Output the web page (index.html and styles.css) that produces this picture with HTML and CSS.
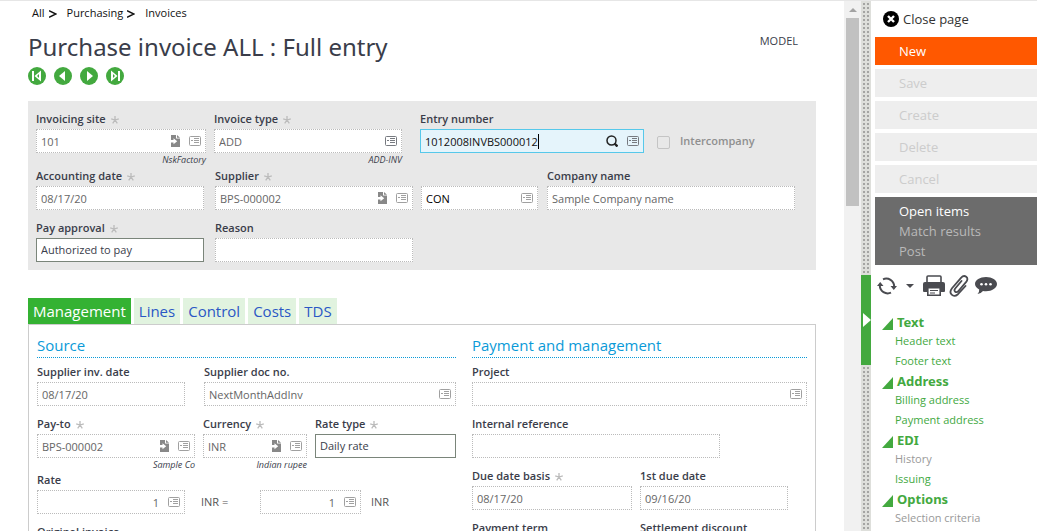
FILE: index.html
```html
<!DOCTYPE html>
<html lang="en">
<head>
<meta charset="utf-8">
<title>Purchase invoice ALL : Full entry</title>
<link rel="stylesheet" href="styles.css">
</head>
<body>
<svg class="sprite" aria-hidden="true">
  <symbol id="card" viewBox="0 0 12 10">
    <rect x=".5" y=".5" width="11" height="9" rx="1" fill="none" stroke="currentColor"/>
    <path d="M2 4.500h2M5 2.500h5M5 4.500h5M5 6.500h5" fill="none" stroke="currentColor"/>
  </symbol>
  <symbol id="jump" viewBox="0 0 10 12">
    <path d="M1 0h5v3.500h4V12H1zM7 0l3 2.700H7z" fill="currentColor"/>
    <path d="M0 5h3.500V3.200L7.200 6.200 3.500 9.200V7.400H0z" fill="#fff"/>
  </symbol>
  <symbol id="star" viewBox="0 0 8 8">
    <path d="M4 4V0M4 4L.2 2.800M4 4L1.700 7.400M4 4l2.300 3.400M4 4l3.800-1.200" fill="none" stroke="currentColor" stroke-width="1.300"/>
  </symbol>
  <symbol id="corner" viewBox="0 0 11 12"><path d="M11 0v12H0z" fill="currentColor"/></symbol>
</svg>
<div class="page">
  <main class="main">
    <nav class="crumbs" aria-label="Breadcrumb">
      <a href="#">All</a><svg viewBox="0 0 8 8"><path d="M0 .7 7 4 0 7.300"/></svg>
      <a href="#">Purchasing</a><svg viewBox="0 0 8 8"><path d="M0 .7 7 4 0 7.300"/></svg>
      <a href="#">Invoices</a>
    </nav>
    <header class="head">
      <h1>Purchase invoice ALL : Full entry</h1>
      <a class="model" href="#">MODEL</a>
    </header>
    <div class="records">
      <button aria-label="First"><svg viewBox="0 0 18 18"><circle cx="9" cy="9" r="9"/><path d="M4 4h2v10H4zM13 3.500v11L6.500 9z"/><path class="cut" d="M11 7v4L9 9z"/></svg></button>
      <button aria-label="Previous"><svg viewBox="0 0 18 18"><circle cx="9" cy="9" r="9"/><path d="M11 4v10L5 9z"/></svg></button>
      <button aria-label="Next"><svg viewBox="0 0 18 18"><circle cx="9" cy="9" r="9"/><path d="M7 4v10l6-5z"/></svg></button>
      <button aria-label="Last"><svg viewBox="0 0 18 18"><circle cx="9" cy="9" r="9"/><path d="M14 4h-2v10h2zM5 3.500v11L11.500 9z"/><path class="cut" d="M7 7v4l2-2z"/></svg></button>
    </div>

    <section class="summary">
      <div class="row">
        <div class="field w170"><label for="site">Invoicing site<svg class="req"><use href="#star"/></svg></label>
          <div class="box"><input id="site" value="101"><button aria-label="Go to site"><svg class="jump"><use href="#jump"/></svg></button><button aria-label="Site list"><svg class="card"><use href="#card"/></svg></button></div><span class="note">NskFactory</span></div>
        <div class="field w188"><label for="type">Invoice type<svg class="req"><use href="#star"/></svg></label>
          <div class="box"><input id="type" value="ADD"><button aria-label="Type list"><svg class="card dark"><use href="#card"/></svg></button></div><span class="note">ADD-INV</span></div>
        <div class="field w224 wide-gap"><label for="entry">Entry number</label>
          <div class="box active"><input id="entry" value="1012008INVBS000012"><span class="caret"></span><button class="last" aria-label="Search"><svg class="find" viewBox="0 0 12 12"><circle cx="5.500" cy="5.500" r="4.500" fill="none" stroke="currentColor" stroke-width="1.500"/><path d="m8.500 8.500 3 3" stroke="currentColor" stroke-width="2.400"/></svg></button><button aria-label="Entry list"><svg class="card dark"><use href="#card"/></svg></button></div></div>
        <div class="check"><input type="checkbox" id="inter" disabled><label for="inter">Intercompany</label></div>
      </div>
      <div class="row">
        <div class="field w168"><label for="adate">Accounting date<svg class="req"><use href="#star"/></svg></label>
          <div class="box"><input id="adate" value="08/17/20"></div></div>
        <div class="field w198"><label for="supplier">Supplier<svg class="req"><use href="#star"/></svg></label>
          <div class="box"><input id="supplier" value="BPS-000002"><button aria-label="Go to supplier"><svg class="jump"><use href="#jump"/></svg></button><button aria-label="Supplier list"><svg class="card"><use href="#card"/></svg></button></div></div>
        <div class="field w117 bottom"><div class="box"><input class="black" aria-label="Control account" value="CON"><button aria-label="Account list"><svg class="card"><use href="#card"/></svg></button></div></div>
        <div class="field w248"><label for="company">Company name</label>
          <div class="box"><input id="company" value="Sample Company name"></div></div>
      </div>
      <div class="row spaced">
        <div class="field w168"><label for="pay">Pay approval<svg class="req"><use href="#star"/></svg></label>
          <select id="pay"><option>Authorized to pay</option></select></div>
        <div class="field w198"><label for="reason">Reason</label><div class="box"><input id="reason"></div></div>
      </div>
    </section>

    <nav class="tabs" aria-label="Sections">
      <a class="on" href="#">Management</a><a href="#">Lines</a><a href="#">Control</a><a href="#">Costs</a><a href="#">TDS</a>
    </nav>
    <div class="panel">
      <section class="source">
        <h2>Source</h2>
        <div class="row gap19">
          <div class="field w148"><label for="sdate">Supplier inv. date</label><div class="box"><input id="sdate" value="08/17/20"></div></div>
          <div class="field grow"><label for="doc">Supplier doc no.</label><div class="box"><input id="doc" value="NextMonthAddInv"><button aria-label="Document list"><svg class="card"><use href="#card"/></svg></button></div></div>
        </div>
        <div class="row spaced">
          <div class="field w158"><label for="payto">Pay-to<svg class="req"><use href="#star"/></svg></label>
            <div class="box"><input id="payto" value="BPS-000002"><button aria-label="Go to pay-to"><svg class="jump"><use href="#jump"/></svg></button><button aria-label="Pay-to list"><svg class="card"><use href="#card"/></svg></button></div><span class="note">Sample Co</span></div>
          <div class="field w104"><label for="cur">Currency<svg class="req"><use href="#star"/></svg></label>
            <div class="box"><input id="cur" value="INR"><button aria-label="Go to currency"><svg class="jump"><use href="#jump"/></svg></button><button aria-label="Currency list"><svg class="card"><use href="#card"/></svg></button></div><span class="note">Indian rupee</span></div>
          <div class="field grow"><label for="rtype">Rate type<svg class="req"><use href="#star"/></svg></label>
            <select id="rtype"><option>Daily rate</option></select></div>
        </div>
        <div class="row rate">
          <div class="field w148"><label for="rate">Rate</label><div class="box num"><input id="rate" value="1"><button aria-label="Rate list"><svg class="card"><use href="#card"/></svg></button></div></div>
          <span class="unit first">INR =</span>
          <div class="field w101 bottom"><div class="box num"><input aria-label="Rate divisor" value="1"><button aria-label="Divisor list"><svg class="card"><use href="#card"/></svg></button></div></div>
          <span class="unit">INR</span>
        </div>
        <div class="row spaced"><div class="field w148"><label for="orig">Original invoice</label><div class="box"><input id="orig"></div></div></div>
      </section>
      <section class="payment">
        <h2>Payment and management</h2>
        <div class="row"><div class="field grow"><label for="project">Project</label><div class="box"><input id="project"><button aria-label="Project list"><svg class="card"><use href="#card"/></svg></button></div></div></div>
        <div class="row spaced"><div class="field w248"><label for="iref">Internal reference</label><div class="box"><input id="iref"></div></div></div>
        <div class="row spaced">
          <div class="field w160"><label for="ddb">Due date basis<svg class="req"><use href="#star"/></svg></label><div class="box"><input id="ddb" value="08/17/20"></div></div>
          <div class="field w148"><label for="due">1st due date</label><div class="box"><input id="due" value="09/16/20"></div></div>
        </div>
        <div class="row spaced">
          <div class="field w160"><label for="term">Payment term</label><div class="box"><input id="term"></div></div>
          <div class="field w148"><label for="disc">Settlement discount</label><div class="box"><input id="disc"></div></div>
        </div>
      </section>
    </div>
  </main>

  <div class="scroll"><svg viewBox="0 0 8 4"><path d="M4 0l4 4H0z"/></svg><div class="thumb"></div></div>
  <div class="split"><button aria-label="Toggle side panel"><svg viewBox="0 0 8 14"><path d="M0 0l8 7-8 7z"/></svg></button></div>

  <aside class="side">
    <button class="close"><svg viewBox="0 0 16 16"><circle cx="8" cy="8" r="8"/><path d="m5 5 6 6m0-6-6 6"/></svg>Close page</button>
    <div class="actions">
      <button class="new">New</button>
      <button disabled>Save</button>
      <button disabled>Create</button>
      <button disabled>Delete</button>
      <button disabled>Cancel</button>
    </div>
    <div class="more"><button>Open items</button><button disabled>Match results</button><button disabled>Post</button></div>
    <div class="tools">
      <button class="refresh" aria-label="Refresh"><svg width="20" height="18" viewBox="0 0 20 18"><path d="M6 2.300A8 8 0 0 1 17.200 9.500M14 15.700A8 8 0 0 1 2.800 8.500" fill="none" stroke="currentColor" stroke-width="2"/><path d="M13.500 9H20l-3.200 4zM0 9h6.500L3.200 5z" fill="currentColor"/></svg></button>
      <button class="arrow" aria-label="Refresh options"><svg width="8" height="4" viewBox="0 0 8 4"><path d="M0 0h8L4 4z" fill="currentColor"/></svg></button>
      <button aria-label="Print"><svg width="22" height="22" viewBox="0 0 22 22"><path d="M4 7V2q0-1 1-1h12q1 0 1 1v5" fill="none" stroke="currentColor" stroke-width="1.600"/><path d="M2 7h18q2 0 2 2v7q0 1-1 1H1q-1 0-1-1V9q0-2 2-2z" fill="currentColor"/><path d="M4.800 12.800h12.400v7.400H4.800z" fill="#fff" stroke="currentColor" stroke-width="1.600"/><path d="M7 15.500h8M7 18h5" stroke="currentColor" stroke-width="1.200"/></svg></button>
      <button aria-label="Attachments"><svg width="20" height="22" viewBox="0 0 20 22"><path d="M12.500 6 6.200 13.500q-1.500 2 0 3.200t3.200-.7L17 7.200q2.700-3.500.2-5.400t-5.200 1L3 13.200q-3 4-.3 6.500t6.300-.5L16.500 11" fill="none" stroke="currentColor" stroke-width="1.800" stroke-linecap="round"/></svg></button>
      <button class="talk" aria-label="Comments"><svg width="22" height="17" viewBox="0 0 22 17"><path d="M11 0c6 0 11 3 11 7s-5 7.200-11 7.200c-1 0-2-.1-3-.3Q6 16.500 2.500 17q2-2 1.700-4.600C1.600 11.100 0 9.200 0 7c0-4 5-7 11-7z" fill="currentColor"/><g fill="#fff"><circle cx="6.500" cy="7.300" r="1.300"/><circle cx="11" cy="7.300" r="1.300"/><circle cx="15.500" cy="7.300" r="1.300"/></g></svg></button>
    </div>
    <nav class="links" aria-label="Related">
      <h3><svg><use href="#corner"/></svg>Text</h3>
      <a href="#">Header text</a><a href="#">Footer text</a>
      <h3><svg><use href="#corner"/></svg>Address</h3>
      <a href="#">Billing address</a><a href="#">Payment address</a>
      <h3><svg><use href="#corner"/></svg>EDI</h3>
      <a class="off" href="#">History</a><a href="#">Issuing</a>
      <h3><svg><use href="#corner"/></svg>Options</h3>
      <a class="off" href="#">Selection criteria</a>
    </nav>
  </aside>
</div>
</body>
</html>
```
FILE: styles.css
```css
* { box-sizing: border-box; }
body {
  margin: 0;
  overflow: hidden;
  background: #fff;
  color: #3a3d4a;
  font: 11px/18px "Open Sans", "Noto Sans", sans-serif;
}
button, input, select { font: inherit; color: inherit; margin: 0; padding: 0; border: 0; background: none; }
a { color: inherit; text-decoration: none; }
h1, h2, h3 { margin: 0; font-weight: 400; }
svg { display: block; flex: none; }
.sprite { position: absolute; width: 0; height: 0; }

.page { display: flex; height: 100vh; border-top: 1px solid #e6e6e6; }
.main { flex: 1; min-width: 0; overflow: hidden; padding: 3px 28px 0; }

.crumbs { display: flex; align-items: center; padding-left: 4px; color: #111; }
.crumbs svg { width: 8px; height: 8px; margin: 2px 10px 0 4px; fill: none; stroke: #111; stroke-width: 1.5; }
.head { display: flex; justify-content: space-between; align-items: flex-start; height: 45px; }
h1 { font-family: "Noto Sans", "Open Sans", sans-serif; font-size: 24px; line-height: 50px; white-space: nowrap; }
.model { margin: 10px 18px 0 0; }
.records { display: flex; gap: 8px; height: 34px; }
.records button { width: 18px; height: 18px; }
.records svg { width: 18px; height: 18px; fill: #fff; }
.records circle, .records .cut { fill: #43a93f; }

.summary { padding: 10px 8px 8px; background: #e8e8e8; }
.row { display: flex; gap: 8px; }
.summary .w168 { margin-right: 3px; }
.summary .w248 { margin-left: 1px; }
.gap19 { gap: 19px; }
.spaced { margin-top: 10px; }
.field { display: flex; flex-direction: column; flex: 0 1 auto; min-width: 0; }
.field label { display: flex; align-items: center; height: 18px; padding-bottom: 2px; font-weight: 600; white-space: nowrap; }
.req { width: 8px; height: 8px; margin: 2px 0 0 5px; color: #bbb; }
.bottom { padding-top: 18px; }
.wide-gap { margin-left: 10px; }
.w101 { width: 101px; } .w104 { width: 104px; } .w117 { width: 117px; }
.w148 { width: 148px; } .w158 { width: 158px; } .w160 { width: 160px; }
.w168 { width: 168px; } .w170 { width: 170px; } .w188 { width: 188px; }
.w198 { width: 198px; } .w224 { width: 224px; } .w248 { width: 248px; }
.grow { flex: 1; }
.box { display: flex; align-items: center; height: 24px; padding: 0 4px; border: 1px dotted #bbb; background: #fff; }
.box input { flex: 1; width: 0; min-width: 0; height: 22px; color: #666; outline: 0; }
.box .black { color: #000; }
.box button + button { margin-left: 9px; }
.num input { text-align: right; margin-right: 9px; }
.card { width: 12px; height: 10px; color: #a0a0a0; }
.card.dark { color: #777a80; }
.jump { width: 10px; height: 12px; color: #888; }
.find { width: 12px; height: 12px; color: #222; }
.active { border: 1px solid #56c8ea; background: #e5f4fb; }
.active input { flex: none; width: 113px; color: #111; }
.caret { width: 1px; height: 15px; background: #000; }
.active .last { margin-left: auto; }
.note { height: 15px; line-height: 14px; font-size: 9px; font-style: italic; text-align: right; }
.source .note { height: 14px; }
select { width: 100%; height: 24px; padding: 0 4px; border: 1px solid #7a857a; border-radius: 0; background: #fff; appearance: none; }
.check { display: flex; align-items: center; gap: 10px; height: 24px; margin: 18px 0 0 5px; font-weight: 600; color: #8f8f8f; }
.check input { width: 13px; height: 13px; margin-top: 2px; border: 1px solid #c4c4c4; border-radius: 2px; appearance: none; }

.tabs { display: flex; gap: 3px; margin-top: 28px; font-size: 15px; line-height: 26px; color: #2a57c5; }
.tabs a { padding: 0 5px; background: #e1f3df; }
.tabs .on { background: #34b233; color: #fff; }
.panel { display: flex; gap: 16px; padding: 8px; border: 1px solid #ccc; }
.source { flex: 419; min-width: 0; }
.payment { flex: 335; min-width: 0; }
h2 { height: 25px; margin-bottom: 6px; border-bottom: 1px dotted #0a9ad8; font-size: 15px; line-height: 24px; color: #0a9ad8; }
.rate { gap: 0; }
.unit { margin: 18px 0 0 10px; line-height: 24px; color: #555; }
.unit.first { width: 59px; margin-left: 16px; }

.scroll { display: flex; flex-direction: column; align-items: center; width: 17px; background: #f1f1f1; }
.scroll svg { width: 8px; height: 4px; margin: 7px 0 6px; fill: #a3a3a3; }
.thumb { width: 13px; height: 188px; background: #c1c1c1; }
.split {
  width: 10px;
  padding-top: 274px;
  background:
    linear-gradient(#dedfdb 2px, transparent 2px) 0 0 / 4px 4px,
    linear-gradient(90deg, #dedfdb 2px, #a4a4a2 2px) 0 0 / 4px 4px;
}
.split button { display: flex; align-items: center; justify-content: flex-end; width: 10px; height: 90px; background: #43a93f; }
.split svg { width: 8px; height: 14px; fill: #fff; }

.side { width: 166px; padding-left: 4px; font-size: 13px; line-height: 20px; }
.close { display: flex; align-items: center; gap: 4px; height: 36px; padding-left: 8px; color: #333; }
.close svg { width: 16px; height: 16px; stroke: #fff; stroke-width: 2.4; }
.close circle { fill: #000; stroke: none; }
.actions { display: grid; gap: 4px; margin-bottom: 4px; }
.actions button { height: 28px; padding-left: 24px; text-align: left; background: #eee; color: #ccc; }
.actions .new { background: #ff5800; color: #fff; font-weight: 500; }
.more { display: grid; padding: 4px 24px; background: #6c6c6c; color: #fff; }
.more button { text-align: left; }
.more button:disabled { color: #b9b9b9; }
.tools { display: flex; align-items: center; gap: 4px; height: 41px; padding-left: 2px; color: #4a4b50; }
.refresh { margin-right: 5px; }
.arrow { margin-right: 5px; }
.talk { margin-left: 2px; }
.links { padding: 6px 0 0 7px; color: #43a93f; }
.links h3 { display: flex; align-items: center; gap: 4px; height: 19px; font-family: "Noto Sans", "Open Sans", sans-serif; font-size: 13px; font-weight: 700; }
.links h3 svg { width: 11px; height: 12px; margin-top: 5px; }
.links a { display: block; padding-left: 13px; font-size: 11px; }
.links .off { color: #999; }
```
